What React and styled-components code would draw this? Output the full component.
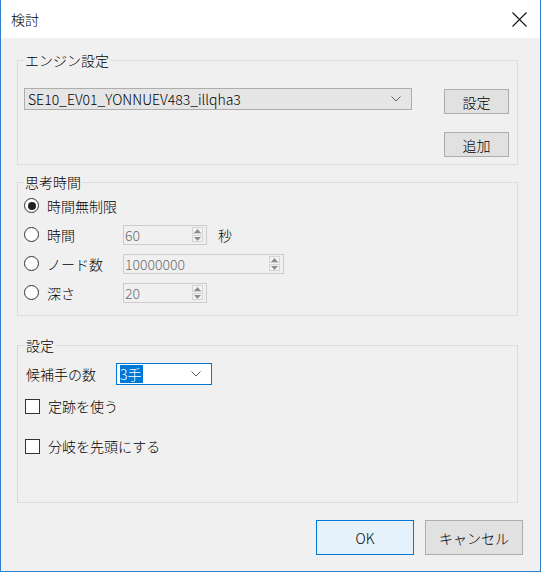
import React from "react";
import styled, { createGlobalStyle } from "styled-components";

const GlobalStyle = createGlobalStyle`
  body {
    margin: 0;
    background: #ffffff;
    font-family: "Noto Sans CJK JP", "Liberation Sans", sans-serif;
    font-size: 14px;
    font-weight: 300;
    color: #000;
  }
`;

export default function App() {
  return (
    <>
      <GlobalStyle />
      <Window>
        <TitleBar>
          <Title>検討</Title>
          <CloseIcon width="15" height="15" viewBox="0 0 15 15">
            <path d="M0.5 0.5 L14.5 14.5 M14.5 0.5 L0.5 14.5" stroke="#111" strokeWidth="1.1" fill="none" />
          </CloseIcon>
        </TitleBar>

        <Body>
          {/* エンジン */}
          <Group $top={0} $pad="19px 8px 7px 6px">
            <Legend>エンジン設定</Legend>
            <EngineRow>
              <Combo $width={388}>
                <ComboText>SE10_EV01_YONNUEV483_illqha3</ComboText>
                <Chevron />
              </Combo>
              <ButtonColumn>
                <SmallButton>設定</SmallButton>
                <SmallButton>追加</SmallButton>
              </ButtonColumn>
            </EngineRow>
          </Group>

          {/* 思考時間 */}
          <Group $top={8} $pad="0 6px 8px 6px">
            <Legend>思考時間</Legend>
            <OptionRow>
              <Choice>
                <Radio $checked />
                時間無制限
              </Choice>
            </OptionRow>
            <OptionRow>
              <Choice>
                <Radio />
                時間
              </Choice>
              <Spin value="60" width={84} />
              <Unit>秒</Unit>
            </OptionRow>
            <OptionRow>
              <Choice>
                <Radio />
                ノード数
              </Choice>
              <Spin value="10000000" width={161} />
            </OptionRow>
            <OptionRow>
              <Choice>
                <Radio />
                深さ
              </Choice>
              <Spin value="20" width={84} />
            </OptionRow>
          </Group>

          {/* 設定 */}
          <Group $top={20} $grow $pad="9px 6px 0 7px">
            <Legend>設定</Legend>
            <CandidateRow>
              <CandidateLabel>候補手の数</CandidateLabel>
              <Combo $width={96} $focused>
                <Selected>3手</Selected>
                <Chevron />
              </Combo>
            </CandidateRow>
            <CheckRow $top={11}>
              <CheckBox />
              定跡を使う
            </CheckRow>
            <CheckRow $top={20}>
              <CheckBox />
              分岐を先頭にする
            </CheckRow>
          </Group>

          <Footer>
            <DialogButton $primary>OK</DialogButton>
            <DialogButton>キャンセル</DialogButton>
          </Footer>
        </Body>
      </Window>
    </>
  );
}

function Chevron() {
  return (
    <ChevronIcon width="10" height="6" viewBox="0 0 10 6">
      <polyline points="0.5,0.5 5,5 9.5,0.5" fill="none" stroke="#666" strokeWidth="1" />
    </ChevronIcon>
  );
}

function Spin({ value, width }) {
  return (
    <SpinBox style={{ width }}>
      <SpinText>{value}</SpinText>
      <SpinButtons>
        <SpinButton>
          <svg width="7" height="4" viewBox="0 0 7 4">
            <polygon points="0,4 3.5,0 7,4" fill="#8c8c8c" />
          </svg>
        </SpinButton>
        <SpinButton>
          <svg width="7" height="4" viewBox="0 0 7 4">
            <polygon points="0,0 3.5,4 7,0" fill="#8c8c8c" />
          </svg>
        </SpinButton>
      </SpinButtons>
    </SpinBox>
  );
}

const Window = styled.div`
  width: 541px;
  height: 572px;
  box-sizing: border-box;
  border: 1px solid #2f7fcb;
  border-top: none;
  background: #f0f0f0;
  display: flex;
  flex-direction: column;
`;

const TitleBar = styled.div`
  height: 38px;
  flex: none;
  background: #ffffff;
  display: flex;
  align-items: center;
  justify-content: space-between;
  padding: 0 13px 0 10px;
`;

const Title = styled.span`
  font-size: 14px;
  line-height: 18px;
`;

const CloseIcon = styled.svg`
  display: block;
`;

const Body = styled.div`
  flex: 1;
  display: flex;
  flex-direction: column;
  padding: 13px 17px 16px 16px;
  min-height: 0;
`;

const Group = styled.fieldset`
  margin: ${(p) => p.$top}px 5px 0 0;
  padding: ${(p) => p.$pad};
  border: 1px solid #dcdcdc;
  min-width: 0;
  flex: ${(p) => (p.$grow ? 1 : "none")};
`;

const Legend = styled.legend`
  padding: 0 1px;
  font-size: 14px;
  line-height: 18px;
`;

const EngineRow = styled.div`
  display: flex;
  justify-content: space-between;
  align-items: flex-start;
`;

const Combo = styled.div`
  width: ${(p) => p.$width}px;
  height: 22px;
  box-sizing: border-box;
  border: 1px solid ${(p) => (p.$focused ? "#0078d7" : "#adadad")};
  background: ${(p) => (p.$focused ? "#ffffff" : "#e5e5e5")};
  display: flex;
  align-items: center;
  justify-content: space-between;
  padding: 0 10px 0 3px;
`;

const ComboText = styled.span`
  font-size: 14px;
  line-height: 18px;
  white-space: nowrap;
`;

const Selected = styled.span`
  background: #0078d7;
  color: #ffffff;
  font-size: 14px;
  line-height: 18px;
  padding-right: 1px;
`;

const ChevronIcon = styled.svg`
  display: block;
  flex: none;
`;

const ButtonColumn = styled.div`
  display: flex;
  flex-direction: column;
  gap: 18px;
  margin-top: 1px;
`;

const SmallButton = styled.button`
  width: 65px;
  height: 25px;
  border: 1px solid #adadad;
  background: #e1e1e1;
  font-family: inherit;
  font-weight: inherit;
  font-size: 14px;
  padding: 0;
  color: #000;
`;

const OptionRow = styled.div`
  display: grid;
  grid-template-columns: 99px auto auto;
  justify-content: start;
  align-items: center;
  height: 29px;
`;

const Choice = styled.label`
  display: flex;
  align-items: center;
  gap: 8px;
  line-height: 18px;
`;

const Radio = styled.span`
  width: 15px;
  height: 15px;
  box-sizing: border-box;
  border-radius: 50%;
  border: 1px solid #333333;
  background: #ffffff;
  display: flex;
  align-items: center;
  justify-content: center;
  &::after {
    content: "";
    width: 8px;
    height: 8px;
    border-radius: 50%;
    background: ${(p) => (p.$checked ? "#222222" : "transparent")};
  }
`;

const SpinBox = styled.div`
  height: 20px;
  box-sizing: border-box;
  border: 1px solid #cccccc;
  background: #f0f0f0;
  display: flex;
  align-items: center;
  justify-content: space-between;
  padding: 0 3px 0 1px;
`;

const SpinText = styled.span`
  color: #6d6d6d;
  font-size: 14px;
  line-height: 18px;
`;

const SpinButtons = styled.div`
  display: flex;
  flex-direction: column;
  gap: 1px;
`;

const SpinButton = styled.span`
  width: 11px;
  height: 7px;
  box-sizing: border-box;
  border: 1px solid #d4d4d4;
  background: #f4f4f4;
  display: flex;
  align-items: center;
  justify-content: center;
`;

const Unit = styled.span`
  margin-left: 11px;
  line-height: 18px;
`;

const CandidateRow = styled.div`
  display: flex;
  align-items: center;
`;

const CandidateLabel = styled.span`
  width: 91px;
  padding-left: 1px;
  box-sizing: border-box;
  line-height: 18px;
`;

const CheckRow = styled.label`
  display: flex;
  align-items: center;
  gap: 8px;
  height: 20px;
  margin-top: ${(p) => p.$top}px;
  line-height: 18px;
`;

const CheckBox = styled.span`
  width: 15px;
  height: 15px;
  box-sizing: border-box;
  border: 1px solid #333333;
  background: #ffffff;
`;

const Footer = styled.div`
  display: flex;
  justify-content: flex-end;
  gap: 11px;
  margin-top: 17px;
`;

const DialogButton = styled.button`
  width: 98px;
  height: 35px;
  padding: 0;
  font-family: inherit;
  font-weight: inherit;
  font-size: 14px;
  color: #000;
  border: 1px solid ${(p) => (p.$primary ? "#0078d7" : "#adadad")};
  background: ${(p) => (p.$primary ? "#e5f1fb" : "#e1e1e1")};
`;
